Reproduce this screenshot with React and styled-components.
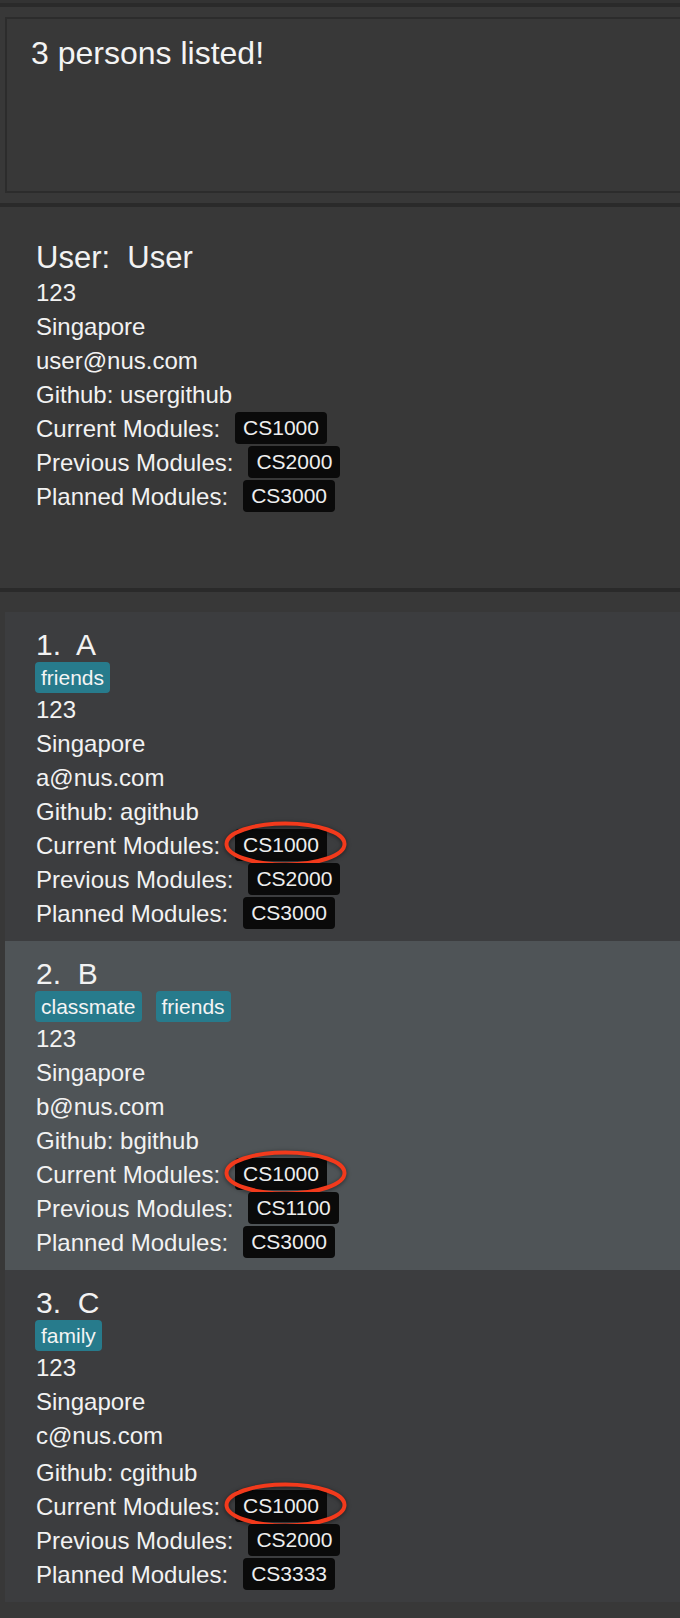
import React from 'react';
import styled, {createGlobalStyle} from 'styled-components';

const GlobalStyle = createGlobalStyle`
    html, body {
        margin: 0;
        padding: 0;
        background: #383838;
    }
    body {
        font-family: "Liberation Sans", Arial, sans-serif;
        color: #f2f2f2;
    }
`;

const Window = styled.div`
    width: 680px;
    min-height: 1618px;
    background: #383838;
    display: flex;
    flex-direction: column;
    overflow: hidden;
`;

const TopStrip = styled.div`
    height: 3px;
    background: #333333;
`;

const Divider = styled.div`
    height: 4px;
    flex-shrink: 0;
    background: #2a2a2a;
`;

const ResultArea = styled.div`
    padding: 10px 0 10px 5px;
`;

const ResultBox = styled.div`
    height: 176px;
    box-sizing: border-box;
    border: 2px solid #2c2c2c;
    border-right: none;
    padding: 14px 24px;
    font-size: 32px;
    line-height: 40px;
    color: #f4f4f4;
`;

const UserPanel = styled.div`
    height: 381px;
    box-sizing: border-box;
    padding: 33px 0 0 36px;
`;

const UserTitle = styled.div`
    font-size: 31px;
    line-height: 36px;
    white-space: pre;
`;

const ListGap = styled.div`
    height: 20px;
`;

const PersonList = styled.div`
    margin-left: 5px;
    background: #3c3d3f;
    display: flex;
    flex-direction: column;
`;

const Card = styled.div`
    padding: 15px 0 10px 31px;
    background: ${props => props.$alt ? '#4f5457' : '#3c3d3f'};
`;

const CardTitle = styled.div`
    font-size: 30px;
    line-height: 35px;
    white-space: pre;
`;

const TagRow = styled.div`
    display: flex;
    gap: 14px;
    height: 31px;
    margin-left: -1px;
`;

const Tag = styled.span`
    background: #277b8c;
    border-radius: 4px;
    padding: 0 6px;
    font-size: 21px;
    line-height: 31px;
    color: #f4f4f4;
`;

const Line = styled.div`
    font-size: 24px;
    line-height: 34px;
    margin-top: ${props => props.$shift || 0}px;
`;

const ModuleRow = styled.div`
    display: flex;
    align-items: flex-start;
    gap: 15px;
    font-size: 24px;
    line-height: 34px;
`;

const Badge = styled.span`
    position: relative;
    height: 32px;
    line-height: 32px;
    padding: 0 8px;
    background: #0a0a0a;
    border-radius: 4px;
    font-size: 21px;
    color: #eeeeee;
`;

const Ring = styled.svg`
    position: absolute;
    left: -11px;
    top: -8px;
    width: 123px;
    height: 46px;
    overflow: visible;
    pointer-events: none;
    filter: drop-shadow(0 1px 2px rgba(0, 0, 0, 0.5));
`;

const Module = ({code, circled}) => (
    <Badge>
        {code}
        {circled ? (
            <Ring viewBox="0 0 123 46">
                <ellipse cx="61.5" cy="23" rx="59" ry="20.5" fill="none" stroke="#f23a1c" strokeWidth="4" />
            </Ring>
        ) : null}
    </Badge>
);

const persons = [
    {name: 'A', tags: ['friends'], email: 'a@nus.com', github: 'agithub', prev: 'CS2000', planned: 'CS3000'},
    {name: 'B', tags: ['classmate', 'friends'], email: 'b@nus.com', github: 'bgithub', prev: 'CS1100', planned: 'CS3000'},
    {name: 'C', tags: ['family'], email: 'c@nus.com', github: 'cgithub', prev: 'CS2000', planned: 'CS3333', shift: 3}
];

const Modules = ({current, prev, planned, circled}) => (
    <>
        <ModuleRow>Current Modules: <Module code={current} circled={circled} /></ModuleRow>
        <ModuleRow>Previous Modules: <Module code={prev} /></ModuleRow>
        <ModuleRow>Planned Modules: <Module code={planned} /></ModuleRow>
    </>
);

export default function App() {
    return (
        <Window>
            <GlobalStyle />
            <TopStrip />
            <Divider />
            <ResultArea>
                <ResultBox>3 persons listed!</ResultBox>
            </ResultArea>
            <Divider />
            <UserPanel>
                <UserTitle>User:  User</UserTitle>
                <Line>123</Line>
                <Line>Singapore</Line>
                <Line>user@nus.com</Line>
                <Line>Github: usergithub</Line>
                <Modules current="CS1000" prev="CS2000" planned="CS3000" />
            </UserPanel>
            <Divider />
            <ListGap />
            <PersonList>
                {persons.map((p, i) => (
                    <Card key={p.name} $alt={i % 2 === 1}>
                        <CardTitle>{`${i + 1}.  ${p.name}`}</CardTitle>
                        <TagRow>
                            {p.tags.map(t => <Tag key={t}>{t}</Tag>)}
                        </TagRow>
                        <Line>123</Line>
                        <Line>Singapore</Line>
                        <Line>{p.email}</Line>
                        <Line $shift={p.shift}>Github: {p.github}</Line>
                        <Modules current="CS1000" prev={p.prev} planned={p.planned} circled />
                    </Card>
                ))}
            </PersonList>
        </Window>
    );
}
